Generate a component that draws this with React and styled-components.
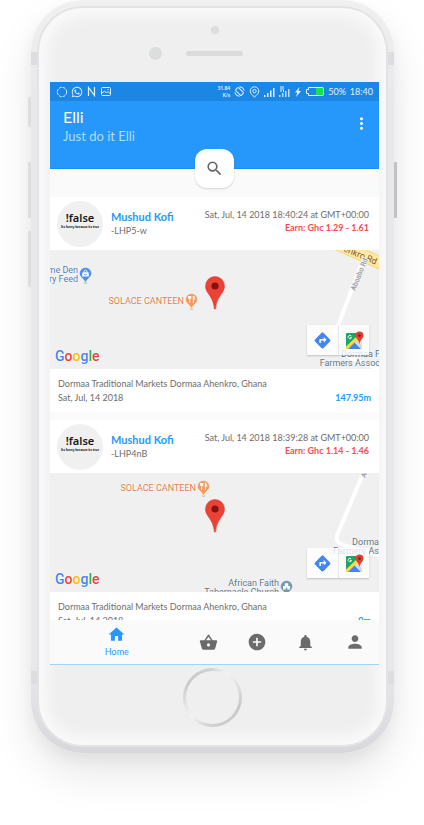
import React from 'react';
import styled, { createGlobalStyle } from 'styled-components';
import {
  MdHome, MdShoppingBasket, MdAddCircle, MdNotifications, MdPerson,
  MdSearch, MdMoreVert, MdDirections,
} from 'react-icons/md';
import { FaWhatsapp } from 'react-icons/fa';

const GlobalStyle = createGlobalStyle`
  * { box-sizing: border-box; }
  body { margin: 0; background: #fff; overflow-x: hidden; }
  button, a { font: inherit; color: inherit; text-decoration: none; }
  button { border: 0; padding: 0; background: none; cursor: pointer; }
  h1, h2, p { margin: 0; font-weight: 400; }
  svg { display: block; flex: none; }
`;

const Page = styled.main`
  height: 100vh;
  min-height: 640px;
  padding: 0 30px 72px 31px;
  font-family: Lato, 'Liberation Sans', sans-serif;
  overflow: hidden;
`;

const Phone = styled.div`
  position: relative;
  height: 100%;
  max-width: 480px;
  margin: 0 auto;
  padding: 8px;
  border-radius: 52px;
  background: linear-gradient(#f0f0f0, #e9e9ec 12%, #e9e9ec 88%, #d8d7dc);
  box-shadow: 0 22px 44px rgba(0, 0, 0, 0.09), 0 8px 16px rgba(0, 0, 0, 0.05);
`;

const SideKey = styled.span`
  position: absolute;
  top: ${(p) => p.$top}px;
  ${(p) => (p.$right ? 'right: -3px;' : 'left: -3px;')}
  width: 3px;
  height: ${(p) => p.$size}px;
  border-radius: 1px;
  background: ${(p) => (p.$right ? '#c1c1c5' : '#dedee0')};
`;

const AntennaBand = styled.span`
  position: absolute;
  left: 0;
  right: 0;
  ${(p) => (p.$bottom ? 'bottom: 69px;' : 'top: 52px;')}
  height: 13px;
  background: #dddde0;
`;

const Face = styled.div`
  position: relative;
  display: flex;
  flex-direction: column;
  height: 100%;
  padding: 0 7px 0 11px;
  border-radius: 44px;
  background: #efefef;
  box-shadow: inset 0 0 14px 8px #fafafa, 0 0 0 2px #e3e3e6;
`;

const TopBezel = styled.div`
  flex: none;
  display: grid;
  grid-template-columns: 1fr 57px 1fr;
  grid-template-rows: 8px 5px;
  row-gap: 17px;
  align-items: center;
  height: 74px;
  padding-top: 18px;
  align-content: start;
`;

const Camera = styled.span`
  grid-column: 2;
  justify-self: center;
  width: 8px;
  height: 8px;
  border-radius: 50%;
  background: #dcdddd;
`;

const Sensor = styled.span`
  grid-row: 2;
  justify-self: end;
  width: 13px;
  height: 13px;
  margin-right: 24px;
  border-radius: 50%;
  background: #dcdddd;
`;

const Speaker = styled.span`
  grid-row: 2;
  grid-column: 2;
  height: 5px;
  border-radius: 3px;
  background: #dbdbdb;
`;

const BottomBezel = styled.div`
  flex: none;
  display: flex;
  justify-content: center;
  height: 80px;
  padding: 3px 4px 0 0;
`;

const HomeButton = styled.button`
  width: 59px;
  height: 59px;
  border-radius: 50%;
  border: 3px solid transparent;
  background:
    linear-gradient(#efefef, #efefef) padding-box,
    conic-gradient(from 30deg, #f3f3f3, #c9c9c9 22%, #cdcdcd 38%, #d5d5d5 45%, #f3f3f3 55%, #c9c9c9 75%, #d0d0d0 90%, #f3f3f3) border-box;
`;

const Screen = styled.div`
  flex: 1;
  min-height: 0;
  display: flex;
  flex-direction: column;
  background: #fafafa;
  overflow: hidden;
`;

const StatusBar = styled.div`
  flex: none;
  display: flex;
  align-items: center;
  justify-content: space-between;
  height: 19px;
  padding: 0 6px 0 6px;
  background: #1c86e5;
  color: #e3f1ff;
  font-size: 9px;
`;

const StatusGroup = styled.div`
  display: flex;
  align-items: center;
  gap: ${(p) => p.$gap}px;
`;

const NetSpeed = styled.span`
  font: 600 5px/7px 'Noto Sans', sans-serif;
  text-align: right;
`;

const Header = styled.header`
  position: relative;
  flex: none;
  display: flex;
  justify-content: space-between;
  height: 68px;
  padding: 6px 8px 0 13px;
  background: #2698fb;
  border-bottom: 1px solid #1c8cf0;
  color: #fff;
`;

const Title = styled.h1`
  font-size: 16px;
  line-height: 20px;
`;

const Subtitle = styled.p`
  font-size: 13px;
  line-height: 19px;
  color: #b4dcff;
`;

const MenuButton = styled.button`
  align-self: flex-start;
  margin-top: 7px;
`;

const SearchButton = styled.button`
  position: absolute;
  left: 50%;
  bottom: -20px;
  z-index: 2;
  display: grid;
  place-items: center;
  width: 39px;
  height: 39px;
  margin-left: -20px;
  border-radius: 12px;
  background: #fff;
  color: #666;
  box-shadow: 0 1px 2px rgba(0, 0, 0, 0.16);
`;

const Feed = styled.section`
  flex: 1;
  min-height: 0;
  display: flex;
  flex-direction: column;
  gap: 8px;
  padding-top: 28px;
  overflow-y: auto;
  scrollbar-width: none;
`;

const Card = styled.article`
  flex: none;
  background: #fff;
`;

const CardHead = styled.div`
  display: flex;
  align-items: center;
  gap: 8px;
  height: 53px;
  padding: 0 10px 0 7px;
`;

const Avatar = styled.div`
  flex: none;
  display: flex;
  flex-direction: column;
  align-items: center;
  width: 46px;
  height: 46px;
  padding-top: 9px;
  border-radius: 50%;
  background: #f0f0f0;
  color: #181818;
  font-family: 'Noto Sans', sans-serif;
  white-space: nowrap;
`;

const AvatarName = styled.strong`
  font-size: 11px;
  line-height: 15px;
  font-weight: 600;
`;

const AvatarMotto = styled.span`
  font-size: 3px;
  line-height: 4px;
  font-weight: 700;
`;

const Person = styled.div`
  flex: 1;
  min-width: 0;
  white-space: nowrap;
`;

const PersonName = styled.h2`
  font-size: 11px;
  line-height: 15px;
  font-weight: 700;
  color: #2698fb;
`;

const PersonCode = styled.p`
  font-size: 9px;
  line-height: 14px;
  color: #6d6d6d;
`;

const Deal = styled.div`
  align-self: flex-start;
  padding-top: 11px;
  text-align: right;
  white-space: nowrap;
  font-size: 9px;
  line-height: 13px;
  color: #6d6d6d;
`;

const Earn = styled.p`
  color: #ff4b4f;
  font-weight: 700;
`;

const CardFoot = styled.div`
  height: 43px;
  padding: 8px 8px 0;
  font-size: 9px;
  line-height: 14px;
  color: #6d6d6d;
  white-space: nowrap;
`;

const FootRow = styled.div`
  display: flex;
  justify-content: space-between;
`;

const Distance = styled.strong`
  color: #2698fb;
`;

const MapView = styled.div`
  position: relative;
  height: 119px;
  overflow: hidden;
  background: #f0f0f0;
  font-family: Roboto, sans-serif;
`;

const Roads = styled.svg`
  position: absolute;
  top: 0;
  right: 0;
`;

/* A place name pinned to a point of the map. */
const Place = styled.div`
  position: absolute;
  top: ${(p) => p.$y}px;
  ${(p) => (p.$fromRight ? 'right' : 'left')}: ${(p) => p.$x}px;
  display: flex;
  align-items: center;
  gap: 1px;
  font-size: 9px;
  line-height: 9px;
  text-align: right;
  white-space: nowrap;
  color: ${(p) => p.$color};
  text-shadow: 0 0 1px #fff, 0 0 2px #fff;
`;

const Marker = styled.svg`
  position: absolute;
  top: 26px;
  left: 50%;
  margin-left: -10px;
`;

const GoogleMark = styled.span`
  position: absolute;
  left: 5px;
  bottom: 4px;
  font-size: 14px;
  line-height: 18px;
  font-weight: 500;
  text-shadow: 0 0 2px #fff, 0 0 1px #fff;
`;

const Tint = styled.span`
  color: ${(p) => p.$c};
`;

const MapTools = styled.div`
  position: absolute;
  right: 10px;
  bottom: 14px;
  display: flex;
  border-radius: 1px;
  background: rgba(255, 255, 255, 0.78);
  box-shadow: 0 1px 2px rgba(0, 0, 0, 0.2);
`;

const MapTool = styled.button`
  display: grid;
  place-items: center;
  width: 31px;
  height: 30px;
  & + & { border-left: 1px solid #e8e8e8; }
`;

const Nav = styled.nav`
  flex: none;
  display: grid;
  grid-template-columns: 134fr repeat(4, 49fr);
  height: 45px;
  background: #fafafa;
  border-bottom: 1px solid #9ed5fa;
`;

const NavItem = styled.a`
  display: flex;
  flex-direction: column;
  align-items: center;
  justify-content: center;
  font-size: 9px;
  line-height: 14px;
  gap: 1px;
  color: ${(p) => (p.$active ? '#2698fb' : '#6b6b6b')};
`;

const PoiIcon = ({ color, kind }) => (
  <svg width="13" height="17" viewBox="0 0 13 17" aria-hidden="true">
    <ellipse cx="6.5" cy="16" rx="2" ry="0.8" fill="#bbb" />
    <path d="M6.5 0.5a6 6 0 0 1 6 6c0 3.6-4.2 4.8-6 9.3C4.700 11.300.5 10.100.5 6.500a6 6 0 0 1 6-6z" fill={color} stroke="#fff" strokeWidth=".4" />
    {kind === 'food' && <path d="M3.500 3v2.500h2.400V3M4.700 3v7M8.300 10V3c1 0 1.500 1.500 1.300 3.600H8.300" stroke="#fff" strokeWidth=".8" fill="#fff" />}
    {kind === 'shop' && <><path d="M3.500 5.300h6l.4 4.200H3.100z" fill="#fff" /><path d="M5 5.300c0-3 3-3 3 0" stroke="#fff" fill="none" /><path d="M5 6.800c.4 1.500 2.600 1.500 3 0" stroke={color} fill="none" strokeWidth=".8" /></>}
    {kind === 'group' && <path d="M3 9.500V6h1.800V3.200h3.400V6H10v3.500H7.300V7.800H5.700v1.700z" fill="#fff" />}
  </svg>
);

const RedMarker = () => (
  <Marker width="20" height="34" viewBox="0 0 20 34" role="img" aria-label="Location">
    <path d="M10 .5a9.500 9.500 0 0 1 9.500 9.700C19.500 17.500 11.500 20 10.600 33H9.400C8.500 20 .5 17.500.5 10.200A9.500 9.500 0 0 1 10 .5z" fill="#ea4335" stroke="#d93529" strokeWidth=".5" />
    <circle cx="10" cy="10" r="3.600" fill="#811411" />
  </Marker>
);

const MapsLogo = () => (
  <svg width="19" height="19" viewBox="0 0 19 19" aria-hidden="true">
    <rect x="1" y="2" width="16" height="16" rx="1" fill="#e8e8e8" />
    <path d="M1 3a1 1 0 0 1 1-1h11v4L2 17.500 1 17z" fill="#1fa463" />
    <path d="M1 15.500 12.500 4.500 14.500 7 3.500 18H2a1 1 0 0 1-1-1z" fill="#ffd93b" />
    <path d="M3 18 9.500 11.500 16 18z" fill="#4285f4" />
    <path d="m10 11 2-2 5 6v2.500z" fill="#d5d5d7" />
    <path d="M6.200 5a1.700 1.700 0 1 0 .3 1.500H5" fill="none" stroke="#fff" strokeWidth=".9" />
    <path d="M14.500.5a4 4 0 0 1 4 4c0 3-3.300 4-4 8.500-.7-4.500-4-5.500-4-8.500a4 4 0 0 1 4-4z" fill="#df4035" />
    <circle cx="14.500" cy="4.600" r="1.400" fill="#8d1b17" />
  </svg>
);

const Google = () => (
  <GoogleMark>
    <Tint $c="#4285f4">G</Tint><Tint $c="#ea4335">o</Tint><Tint $c="#fbbc05">o</Tint>
    <Tint $c="#4285f4">g</Tint><Tint $c="#34a853">l</Tint><Tint $c="#ea4335">e</Tint>
  </GoogleMark>
);

const Signal = () => (
  <svg width="11" height="10" viewBox="0 0 11 10" fill="currentColor" aria-hidden="true">
    <path d="M0 8h1.500v2H0zM3 6h1.500v4H3zM6 3.500h1.500V10H6zM9 1h1.500v9H9z" />
  </svg>
);

const StatusIcons = () => (
  <StatusBar>
    <StatusGroup $gap={3}>
      <svg width="12" height="12" viewBox="0 0 12 12" fill="none" stroke="currentColor"><circle cx="6" cy="6" r="4.700" strokeDasharray="2.800 .9" /></svg>
      <FaWhatsapp size={12} />
      <svg width="11" height="11" viewBox="0 0 11 11" fill="none" stroke="currentColor" strokeWidth="1.200"><path d="M2.500 10V1.500L8.500 9.500V1" /></svg>
      <svg width="12" height="11" viewBox="0 0 12 11" fill="none" stroke="currentColor"><rect x="1.500" y="1.500" width="9" height="8" rx="1" /><path d="m2 7 2.500-2 2 2L8 5.500 10.500 8M7.500 3.500h1" /></svg>
    </StatusGroup>
    <StatusGroup $gap={4}>
      <NetSpeed>31.84<br />K/s</NetSpeed>
      <svg width="11" height="11" viewBox="0 0 11 11" fill="none" stroke="currentColor"><rect x="3.500" y="1.500" width="4" height="8" rx="1" transform="rotate(-45 5.500 5.500)" /><path d="M5.500.7a4.800 4.800 0 0 1 4.700 4M5.500 10.300a4.800 4.800 0 0 1-4.700-4" /></svg>
      <svg width="11" height="12" viewBox="0 0 11 12" fill="none" stroke="currentColor"><path d="M5.500.8a4.300 4.300 0 0 1 4.300 4.300c0 2.400-2.300 4.100-4.300 6-2-1.900-4.300-3.600-4.300-6A4.300 4.300 0 0 1 5.500.8z" /><circle cx="5.500" cy="5.100" r="1.700" /></svg>
      <Signal />
      <svg width="11" height="12" viewBox="0 0 11 12" fill="currentColor"><path d="M0 9h1.500v2H0zM3 7h1.500v4H3zM6 5h1.500v6H6zM9 3h1.500v8H9z" opacity=".8" /><path d="M1 1h4M1 3h4M1 5h2M4.500 4v2" stroke="currentColor" /></svg>
      <svg width="8" height="10" viewBox="0 0 8 10" fill="currentColor"><path d="M5.500 0 1 5.600h2.300L2 10l5-6H4.500z" /></svg>
      <svg width="18" height="9" viewBox="0 0 18 9"><path d="M2.500.5h14a1 1 0 0 1 1 1v6a1 1 0 0 1-1 1h-14v-2h-2v-4h2z" fill="none" stroke="#e3f1ff" /><path d="M10 1h7v7h-7z" fill="#13e24a" /></svg>
      <span>50%</span>
      <span>18:40</span>
    </StatusGroup>
  </StatusBar>
);

const FirstMap = () => (
  <>
    <Roads width="120" height="119" viewBox="0 0 120 119" aria-hidden="true">
      <path d="M104 10 74 89q-4 10 5 14l41 16" fill="none" stroke="#fff" strokeWidth="4" strokeLinejoin="round" />
      <path d="m76-7 50 22" stroke="#f6d582" strokeWidth="13" />
      <path d="m76-7 50 22" stroke="#ffeba1" strokeWidth="11" />
      <text x="84" y="1" transform="rotate(23 84 1)" fontFamily="Roboto" fontSize="9" fill="#8a5525">enkro Rd</text>
      <text x="96" y="41" transform="rotate(-68 96 41)" fontFamily="Roboto" fontSize="7" fill="#7d8790" stroke="#f0f0f0" strokeWidth="2" paintOrder="stroke">Aboabo Rd</text>
    </Roads>
    <Place $x={-4} $y={16} $color="#5679b8">
      <span>me Den<br />try Feed</span>
      <PoiIcon color="#4a90ee" kind="shop" />
    </Place>
    <Place $x={181} $y={43} $fromRight $color="#da7f4f">
      SOLACE CANTEEN <PoiIcon color="#f79a5e" kind="food" />
    </Place>
    <Place $x={-1} $y={100} $fromRight $color="#5d7586">
      <span>Dormaa F<br />Farmers Assoc</span>
    </Place>
  </>
);

const SecondMap = () => (
  <>
    <Roads width="120" height="119" viewBox="0 0 120 119" aria-hidden="true">
      <path d="M106-4 79 60q-4 9 5 12l36 10" fill="none" stroke="#fff" strokeWidth="4" strokeLinejoin="round" />
      <text x="106" y="5" transform="rotate(-67 106 5)" fontFamily="Roboto" fontSize="7" fill="#7d8790">Aboabo</text>
    </Roads>
    <Place $x={169} $y={7} $fromRight $color="#da7f4f">
      SOLACE CANTEEN <PoiIcon color="#f79a5e" kind="food" />
    </Place>
    <Place $x={0} $y={65} $fromRight $color="#5d7586">
      <span>Dorma<br />Farmers As</span>
    </Place>
    <Place $x={86} $y={106} $fromRight $color="#5d7586">
      <span>African Faith<br />Tabernacle Church</span>
      <PoiIcon color="#7499ac" kind="group" />
    </Place>
  </>
);

const requests = [
  { code: '-LHP5-w', time: '18:40:24', earn: '1.29 - 1.61', distance: '147.95m', Map: FirstMap },
  { code: '-LHP4nB', time: '18:39:28', earn: '1.14 - 1.46', distance: '0m', Map: SecondMap },
];

const RequestCard = ({ code, time, earn, distance, Map }) => (
  <Card>
    <CardHead>
      <Avatar>
        <AvatarName>!false</AvatarName>
        <AvatarMotto>Its funny because its true</AvatarMotto>
      </Avatar>
      <Person>
        <PersonName>Mushud Kofi</PersonName>
        <PersonCode>{code}</PersonCode>
      </Person>
      <Deal>
        <p>Sat, Jul, 14 2018 {time} at GMT+00:00</p>
        <Earn>Earn: Ghc {earn}</Earn>
      </Deal>
    </CardHead>
    <MapView>
      <Map />
      <RedMarker />
      <Google />
      <MapTools>
        <MapTool aria-label="Directions"><MdDirections size={19} color="#4285f4" /></MapTool>
        <MapTool aria-label="Open in Maps"><MapsLogo /></MapTool>
      </MapTools>
    </MapView>
    <CardFoot>
      <p>Dormaa Traditional Markets Dormaa Ahenkro, Ghana</p>
      <FootRow>
        <span>Sat, Jul, 14 2018</span>
        <Distance>{distance}</Distance>
      </FootRow>
    </CardFoot>
  </Card>
);

export default function App() {
  return (
    <Page>
      <GlobalStyle />
      <Phone>
        <SideKey $top={97} $size={30} />
        <SideKey $top={162} $size={56} />
        <SideKey $top={231} $size={56} />
        <SideKey $top={162} $size={56} $right />
        <AntennaBand />
        <AntennaBand $bottom />
        <Face>
          <TopBezel>
            <Camera />
            <Sensor />
            <Speaker />
          </TopBezel>
          <Screen>
            <StatusIcons />
            <Header>
              <div>
                <Title>Elli</Title>
                <Subtitle>Just do it Elli</Subtitle>
              </div>
              <MenuButton aria-label="More options"><MdMoreVert size={19} /></MenuButton>
              <SearchButton aria-label="Search"><MdSearch size={19} /></SearchButton>
            </Header>
            <Feed>
              {requests.map((r) => <RequestCard key={r.code} {...r} />)}
            </Feed>
            <Nav>
              <NavItem href="#home" $active><MdHome size={19} />Home</NavItem>
              <NavItem href="#basket" aria-label="Basket"><MdShoppingBasket size={19} /></NavItem>
              <NavItem href="#add" aria-label="Add"><MdAddCircle size={20} /></NavItem>
              <NavItem href="#alerts" aria-label="Notifications"><MdNotifications size={19} /></NavItem>
              <NavItem href="#profile" aria-label="Profile"><MdPerson size={20} /></NavItem>
            </Nav>
          </Screen>
          <BottomBezel>
            <HomeButton aria-label="Home button" />
          </BottomBezel>
        </Face>
      </Phone>
    </Page>
  );
}
